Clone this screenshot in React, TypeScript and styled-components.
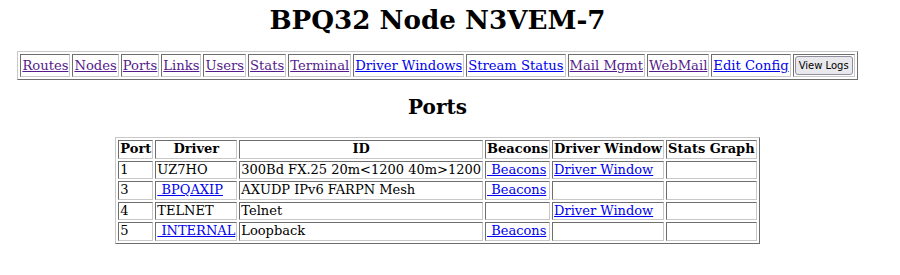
import React from 'react';
import styled, { createGlobalStyle } from 'styled-components';

const colors = {
  link: '#0000ee',
  visited: '#551a8b',
  light: '#c8c8c8',
  dark: '#6e6e6e',
};

const GlobalStyle = createGlobalStyle`
  body {
    margin: 0;
    background: #ffffff;
    color: #000000;
    font-family: "DejaVu Serif", serif;
    font-size: 13.15px;
  }
`;

const Page = styled.div`
  width: 875px;
  display: flex;
  flex-direction: column;
  align-items: center;
`;

const Title = styled.h1`
  margin: 4px 0 16px;
  font-size: 26.2px;
  font-weight: bold;
`;

const SectionTitle = styled.h2`
  margin: 15px 0 18px;
  font-size: 20px;
  font-weight: bold;
`;

const Table = styled.table<{ $size?: number }>`
  border-collapse: separate;
  border-spacing: 2px;
  border: 1px solid;
  border-color: ${colors.light} ${colors.dark} ${colors.dark} ${colors.light};
  font-size: ${p => p.$size ?? 13.15}px;
`;

const Cell = styled.td<{ $head?: boolean }>`
  padding: 1px;
  line-height: 14.5px;
  border: 1px solid;
  border-color: ${colors.dark} ${colors.light} ${colors.light} ${colors.dark};
  text-align: ${p => (p.$head ? 'center' : 'left')};
  font-weight: ${p => (p.$head ? 'bold' : 'normal')};
  white-space: nowrap;
`;

const NavCell = styled.td`
  padding: 1px;
  border: 1px solid;
  border-color: ${colors.dark} ${colors.light} ${colors.light} ${colors.dark};
  white-space: nowrap;
`;

const Link = styled.a<{ $visited?: boolean }>`
  color: ${p => (p.$visited ? colors.visited : colors.link)};
  text-decoration: underline;
  cursor: pointer;
`;

const LogButton = styled.button`
  display: block;
  font-family: "DejaVu Sans", sans-serif;
  font-size: 10px;
  line-height: 13px;
  padding: 2px 3px;
  background: #e9e9ed;
  color: #000;
  border: 1px solid #8f8f9d;
  border-radius: 3px;
`;

const navItems = [
  { label: 'Routes', visited: true },
  { label: 'Nodes', visited: true },
  { label: 'Ports', visited: true },
  { label: 'Links', visited: true },
  { label: 'Users', visited: true },
  { label: 'Stats', visited: true },
  { label: 'Terminal', visited: true },
  { label: 'Driver Windows', visited: false },
  { label: 'Stream Status', visited: false },
  { label: 'Mail Mgmt', visited: true },
  { label: 'WebMail', visited: true },
  { label: 'Edit Config', visited: false },
];

interface PortRow {
  port: string;
  driver: string;
  driverLink: boolean;
  id: string;
  beacons: boolean;
  window: boolean;
}

const ports: PortRow[] = [
  { port: '1', driver: 'UZ7HO', driverLink: false, id: '300Bd FX.25 20m<1200 40m>1200', beacons: true, window: true },
  { port: '3', driver: 'BPQAXIP', driverLink: true, id: 'AXUDP IPv6 FARPN Mesh', beacons: true, window: false },
  { port: '4', driver: 'TELNET', driverLink: false, id: 'Telnet', beacons: false, window: true },
  { port: '5', driver: 'INTERNAL', driverLink: true, id: 'Loopback', beacons: true, window: false },
];

const headers = ['Port', 'Driver', 'ID', 'Beacons', 'Driver Window', 'Stats Graph'];

export default function App() {
  return (
    <>
      <GlobalStyle />
      <Page>
        <Title>BPQ32 Node N3VEM-7</Title>
        <Table>
          <tbody>
            <tr>
              {navItems.map(item => (
                <NavCell key={item.label}>
                  <Link $visited={item.visited}>{item.label}</Link>
                </NavCell>
              ))}
              <NavCell>
                <LogButton>View Logs</LogButton>
              </NavCell>
            </tr>
          </tbody>
        </Table>
        <SectionTitle>Ports</SectionTitle>
        <Table $size={13}>
          <tbody>
            <tr>
              {headers.map(h => (
                <Cell as="th" $head key={h}>
                  {h}
                </Cell>
              ))}
            </tr>
            {ports.map(row => (
              <tr key={row.port}>
                <Cell>{row.port}</Cell>
                <Cell>
                  {row.driverLink ? <Link>{'\u00a0' + row.driver}</Link> : row.driver}
                </Cell>
                <Cell>{row.id}</Cell>
                <Cell>{row.beacons && <Link>{'\u00a0Beacons'}</Link>}</Cell>
                <Cell>{row.window && <Link>Driver Window</Link>}</Cell>
                <Cell />
              </tr>
            ))}
          </tbody>
        </Table>
      </Page>
    </>
  );
}
